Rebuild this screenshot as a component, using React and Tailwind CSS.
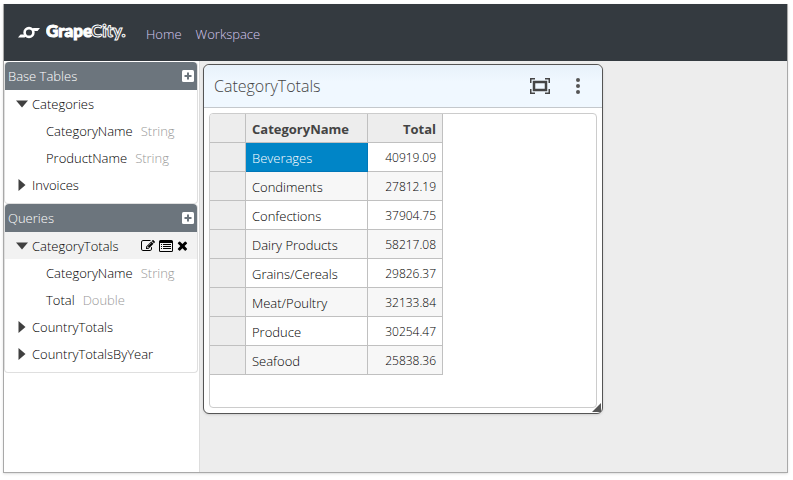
import React from 'react';

const baseTables = [
  {
    name: 'Categories',
    open: true,
    fields: [
      { name: 'CategoryName', type: 'String' },
      { name: 'ProductName', type: 'String' },
    ],
  },
  { name: 'Invoices', open: false, fields: [] },
];

const queries = [
  {
    name: 'CategoryTotals',
    open: true,
    selected: true,
    fields: [
      { name: 'CategoryName', type: 'String' },
      { name: 'Total', type: 'Double' },
    ],
  },
  { name: 'CountryTotals', open: false, fields: [] },
  { name: 'CountryTotalsByYear', open: false, fields: [] },
];

const rows = [
  ['Beverages', '40919.09'],
  ['Condiments', '27812.19'],
  ['Confections', '37904.75'],
  ['Dairy Products', '58217.08'],
  ['Grains/Cereals', '29826.37'],
  ['Meat/Poultry', '32133.84'],
  ['Produce', '30254.47'],
  ['Seafood', '25838.36'],
];

const Logo = () => (
  <a href="#" aria-label="GrapeCity" className="flex items-center gap-1.5 text-white">
    <svg viewBox="0 0 22 14" className="h-3.5 w-[22px]" fill="none" stroke="currentColor">
      <circle cx="11" cy="6.5" r="4.4" strokeWidth="2.6" />
      <path d="M0 11.500 2.500 8.500h3L8 10.500 6.500 11.500zM22 2l-2.500 3h-3L14 3l1.500-1z" fill="currentColor" stroke="none" />
    </svg>
    <svg viewBox="0 0 80 24" className="h-6 w-20" fontFamily="Lato, sans-serif" fontWeight="900" fontSize="17">
      <text x="0" y="16" fill="#fff" stroke="#fff" strokeWidth="1">Grape</text>
      <text x="45" y="16" fill="#343a40" stroke="#fff" strokeWidth="1">City.</text>
    </svg>
  </a>
);

const EditIcon = () => (
  <svg viewBox="0 0 1792 1792" className="size-3.5" fill="currentColor">
    <path d="M888 1184l116-116-152-152-116 116v56h96v96h56zm440-720q-16-16-33 1l-350 350q-17 17-1 33t33-1l350-350q17-17 1-33zm80 594v190q0 119-84.5 203.5t-203.5 84.5h-832q-119 0-203.5-84.5t-84.5-203.5v-832q0-119 84.5-203.5t203.5-84.5h832q63 0 117 25 15 7 18 23 3 17-9 29l-49 49q-14 14-32 8-23-6-45-6h-832q-66 0-113 47t-47 113v832q0 66 47 113t113 47h832q66 0 113-47t47-113v-126q0-13 9-22l64-64q15-15 35-7t20 29zm-96-738l288 288-672 672h-288v-288zm444 132l-92 92-288-288 92-92q28-28 68-28t68 28l152 152q28 28 28 68t-28 68z" />
  </svg>
);

const ListIcon = () => (
  <svg viewBox="0 0 14 14" className="size-3.5" fill="currentColor">
    <path fillRule="evenodd" d="M1.500 1h11A1.500 1.500 0 0 1 14 2.500v9a1.500 1.500 0 0 1-1.500 1.500h-11A1.500 1.500 0 0 1 0 11.500v-9A1.500 1.500 0 0 1 1.500 1zM1 4v7.500q0 .5.5.5h11q.5 0 .5-.5V4z" />
    <path d="M2 5h1v1H2zM4 5h8v1H4zM2 7h1v1H2zM4 7h8v1H4zM2 9h1v1H2zM4 9h8v1H4z" />
  </svg>
);

const CloseIcon = () => (
  <svg viewBox="200 100 1408 1700" className="h-3.5 w-[11px]" fill="currentColor">
    <path d="M1490 1322q0 40-28 68l-136 136q-28 28-68 28t-68-28l-294-294-294 294q-28 28-68 28t-68-28l-136-136q-28-28-28-68t28-68l294-294-294-294q-28-28-28-68t28-68l136-136q28-28 68-28t68 28l294 294 294-294q28-28 68-28t68 28l136 136q28 28 28 68t-28 68l-294 294 294 294q28 28 28 68z" />
  </svg>
);

const TreeNode = ({ node }) => (
  <li>
    <div className={`flex h-[27px] items-center pr-[9px] pl-[11px] ${node.selected ? 'bg-[#f2f2f2]' : ''}`}>
      <button className="flex items-center gap-1" aria-expanded={node.open}>
        <svg viewBox="0 0 12 12" className="size-3 text-[#404040]" fill="currentColor">
          {node.open ? <path d="M0 2.500h12L6 9.500z" /> : <path d="M2.500 0v12L9.500 6z" />}
        </svg>
        <span>{node.name}</span>
      </button>
      {node.selected && (
        <div className="ml-auto flex items-center gap-1 text-black">
          <button aria-label="Edit"><EditIcon /></button>
          <button aria-label="View"><ListIcon /></button>
          <button aria-label="Delete"><CloseIcon /></button>
        </div>
      )}
    </div>
    {node.fields.length > 0 && (
      <ul>
        {node.fields.map((field) => (
          <li key={field.name} className="flex h-[27px] items-center gap-2 pl-[41px]">
            <span>{field.name}</span>
            <span className="text-[#999]">{field.type}</span>
          </li>
        ))}
      </ul>
    )}
  </li>
);

const TreePanel = ({ title, nodes }) => (
  <section className="rounded border-x border-b border-[#dfdfdf] pb-[5px]">
    <h2 className="flex h-7 items-center justify-between rounded-t bg-[#6c757d] px-[3px] text-white">
      {title}
      <button aria-label={`Add to ${title}`}>
        <svg viewBox="0 0 12 12" className="size-3">
          <rect width="12" height="12" rx="1.500" fill="#fff" />
          <path d="M6 2.500v7M2.500 6h7" stroke="#6c757d" strokeWidth="2" />
        </svg>
      </button>
    </h2>
    <ul>
      {nodes.map((node) => (
        <TreeNode key={node.name} node={node} />
      ))}
    </ul>
  </section>
);

const DataTable = () => (
  <table className="border-separate border-spacing-0 text-[13px]">
    <thead>
      <tr className="h-[29px] bg-[#ededed] text-[#444]">
        <th className="w-9 border-r border-b border-[#c0c0c0]" />
        <th className="w-[122px] border-r border-b border-[#c0c0c0] px-1.5 pt-0.5 text-left font-bold">CategoryName</th>
        <th className="w-[75px] border-r border-b border-[#c0c0c0] px-1.5 pt-0.5 text-right font-bold">Total</th>
      </tr>
    </thead>
    <tbody>
      {rows.map(([name, total], idx) => (
        <tr key={name} className={`h-[29px] ${idx % 2 ? 'bg-[#f7f7f7]' : 'bg-white'}`}>
          <td className="border-r border-b border-[#c0c0c0] bg-[#ededed]" />
          <td
            className={`border-r border-b px-1.5 pt-0.5 ${
              idx === 0 ? 'border-[#0077b8] bg-[#0085c7] text-white' : 'border-[#c0c0c0]'
            }`}
          >
            {name}
          </td>
          <td className="border-r border-b border-[#c0c0c0] px-1.5 pt-0.5 text-right text-[12px]">{total}</td>
        </tr>
      ))}
    </tbody>
  </table>
);

const QueryWindow = () => (
  <section className="relative flex h-[350px] w-[400px] flex-col rounded-md border border-[#555] bg-white shadow">
    <header className="flex h-[43px] shrink-0 items-center rounded-t-md border-b border-[#c4c8cc] bg-linear-to-b from-[#e8f1fa] to-[#f0f8ff] to-40% px-2.5 text-[#444]">
      <h1 className="text-[16px]">CategoryTotals</h1>
      <div className="ml-auto flex items-center gap-5 pr-1.5">
        <button aria-label="Maximize">
          <svg viewBox="0 0 20 16" className="h-4 w-5" fill="none" stroke="#444">
            <rect x="4" y="4" width="12" height="8" strokeWidth="2.5" />
            <path d="M.75 5V.75H5M15 .75h4.250V5M19.250 11v4.250H15M5 15.250H.75V11" strokeWidth="1.500" />
          </svg>
        </button>
        <button aria-label="Menu">
          <svg viewBox="0 0 16 16" className="size-4" fill="#555">
            <circle cx="8" cy="2" r="2" />
            <circle cx="8" cy="8" r="2" />
            <circle cx="8" cy="14" r="2" />
          </svg>
        </button>
      </div>
    </header>
    <div className="m-[5px] grow overflow-hidden rounded border border-[#ccc]">
      <DataTable />
    </div>
    <svg viewBox="0 0 9 9" className="absolute right-px bottom-px size-[9px]" fill="#555">
      <path d="M9 0v9H0z" />
    </svg>
  </section>
);

const App = () => (
  <div className="flex h-screen flex-col bg-white pt-1 pr-[5px] pb-[7px] pl-[3px] font-['Open_Sans',sans-serif] text-[13px] leading-5 font-light text-black">
    <div className="flex grow flex-col border border-t-0 border-[#a9a9a9] bg-[#ededed] shadow">
      <header className="flex h-[57px] shrink-0 items-center bg-[#343a40] pl-3.5">
        <Logo />
        <nav className="flex gap-3.5 pt-0.5 pl-5 text-[#d6c8f0]">
          <a href="#">Home</a>
          <a href="#">Workspace</a>
        </nav>
      </header>
      <main className="flex grow">
        <aside className="flex w-[196px] shrink-0 flex-col border-r border-[#ddd] bg-white pt-px pr-px">
          <TreePanel title="Base Tables" nodes={baseTables} />
          <TreePanel title="Queries" nodes={queries} />
        </aside>
        <div className="grow p-[3px]">
          <QueryWindow />
        </div>
      </main>
    </div>
  </div>
);

export default App;
